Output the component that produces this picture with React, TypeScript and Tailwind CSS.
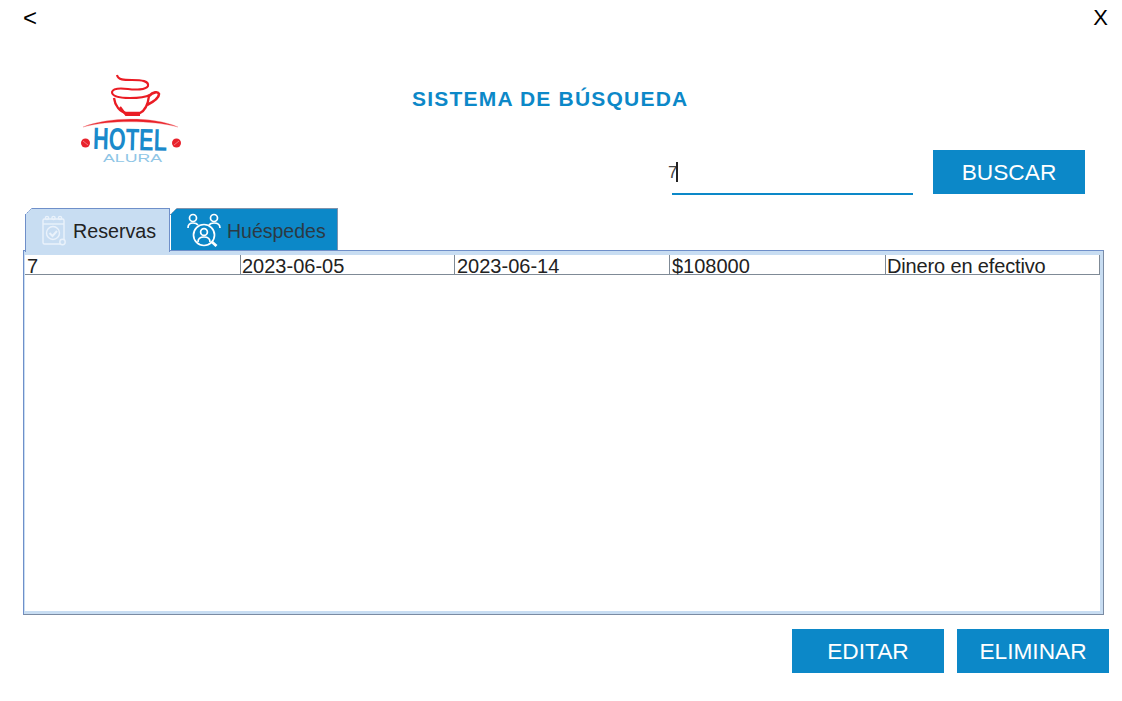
const font = { fontFamily: '"Liberation Sans", Arial, sans-serif' };

const HotelLogo = () => (
  <svg width="140" height="115" viewBox="0 0 140 115" className="shrink-0">
    {/* steam + cup */}
    <path d="M57 15C58 20 64 20 72 20C82 20 89 21 88 26C86 30 75 30 68 29C60 28 53 28 52 32C52 37 62 38 70 38C78 38 86 37 90 35" fill="none" stroke="#ea1c24" strokeWidth="2.1" />
    <path d="M54 38C55 46 60 52 66 53L80 53C86 50 88 44 89 36" fill="none" stroke="#ea1c24" strokeWidth="2.3" />
    <path d="M89 36C93 32 98 31 99 34C99 38 93 42 87 45" fill="none" stroke="#ea1c24" strokeWidth="2.6" />
    <path d="M60 47L66 55L80 55" fill="none" stroke="#ea1c24" strokeWidth="2.2" />
    {/* swoosh under the cup */}
    <path d="M23 67C48 57 92 56 118 67C92 60 48 60 23 67z" fill="#ea1c24" stroke="#f28a8e" strokeWidth="0.4" />
    {/* coffee beans */}
    <ellipse cx="25.5" cy="83" rx="4.5" ry="4.5" fill="#e8222c" />
    <path d="M23 81l5 4" stroke="#f7b5b8" strokeWidth="0.6" />
    <ellipse cx="116.5" cy="83" rx="4.5" ry="4.5" fill="#e8222c" />
    <path d="M119 81l-5 4" stroke="#f7b5b8" strokeWidth="0.6" />
    <text x="33" y="90" fontFamily="'Liberation Sans', sans-serif" fontWeight="700" fontSize="31" fill="#1a8acb" textLength="74" lengthAdjust="spacingAndGlyphs" transform="rotate(1.5 70 80)">HOTEL</text>
    <text x="43" y="102" fontFamily="'Liberation Sans', sans-serif" fontSize="11" fill="#8fc6e6" textLength="59" lengthAdjust="spacingAndGlyphs">ALURA</text>
  </svg>
);

const ReservasIcon = () => (
  <svg width="26" height="32" viewBox="0 0 26 32" fill="none" stroke="#eaf2fb" strokeWidth="1.4" className="shrink-0">
    <rect x="2" y="5" width="21" height="25" rx="1.5" />
    <path d="M2 10h21" />
    <circle cx="6" cy="4" r="1.6" />
    <circle cx="12.5" cy="4" r="1.6" />
    <circle cx="19" cy="4" r="1.6" />
    <circle cx="12" cy="19" r="6.5" />
    <path d="M8.5 19l3 3 4.5-5" strokeWidth="2" />
    <circle cx="21.5" cy="28" r="2.7" fill="#c8ddf2" />
  </svg>
);

const HuespedesIcon = () => (
  <svg width="36" height="34" viewBox="0 0 36 34" fill="none" stroke="#ffffff" strokeWidth="1.7" className="shrink-0">
    <circle cx="7" cy="5" r="3.5" />
    <path d="M2 15c0-3 1-5 5-5 2 0 4 .5 5 2" />
    <circle cx="28" cy="5" r="3.5" />
    <path d="M34 15c0-3-1-5-6-5-2 0-4 .5-5 2" />
    <circle cx="18" cy="22" r="10.5" />
    <circle cx="18" cy="19" r="3.4" />
    <path d="M12 29c0-3 2-5 6-5s6 2 6 5" />
    <path d="M26 29l4.5 4" strokeWidth="2.8" />
  </svg>
);

// corner cut of the tabs: white triangle plus a thin diagonal edge
const TabCorner = ({ color }: { color: string }) => (
  <svg width="7" height="7" viewBox="0 0 7 7" className="absolute -top-px -left-px">
    <path d="M0 0H7L0 7z" fill="#ffffff" />
    <path d="M0 7L7 0" stroke={color} strokeWidth="1" strokeDasharray="1.5 1" />
  </svg>
);

const ActionButton = ({ label }: { label: string }) => (
  <button className="w-[152px] h-[44px] bg-[#0c88c8] text-white text-[22.7px] leading-none flex items-center justify-center">
    {label}
  </button>
);

const cells = [
  { text: '7', width: 'w-[215px]', extra: 'pl-[2px]' },
  { text: '2023-06-05', width: 'w-[214px]', extra: 'pl-[1px] border-l border-[#7f8a96]' },
  { text: '2023-06-14', width: 'w-[215px]', extra: 'pl-[2px] border-l border-[#7f8a96]' },
  { text: '$108000', width: 'w-[216px]', extra: 'pl-[2px] border-l border-[#7f8a96]' },
  { text: 'Dinero en efectivo', width: 'flex-1', extra: 'pl-[1px] tracking-[-0.15px] border-l border-[#7f8a96]' },
];

export default function App() {
  return (
    <div className="w-[1122px] h-[701px] bg-white flex flex-col overflow-hidden text-[#222]" style={font}>
      <div className="h-[36px] flex items-start justify-between pl-[23px] pr-[14px] pt-[6px] text-black text-[22px] leading-[24px]">
        <span className="text-[24px]">&lt;</span>
        <span>X</span>
      </div>

      <div className="h-[172px] flex items-start">
        <div className="ml-[60px] mt-[24px]">
          <HotelLogo />
        </div>
        <div className="flex-1 flex flex-col">
          <h1 className="ml-[212px] mt-[51px] h-[24px] text-[21px] leading-[24px] tracking-[1.2px] font-bold text-[#0c88c8]">
            SISTEMA DE BÚSQUEDA
          </h1>
          <div className="mt-[39px] mr-[37px] flex items-start justify-end gap-[20px]">
            <div className="w-[241px] h-[45px] border-b-2 border-[#0c88c8] flex items-center">
              <span className="-ml-[4px] mt-[1px] text-[17px] leading-none text-[#444]">7</span>
              <span className="w-[2px] h-[20px] bg-[#222] -ml-[1px]" />
            </div>
            <ActionButton label="BUSCAR" />
          </div>
        </div>
      </div>

      <div className="h-[42px] flex items-stretch pl-[25px] gap-[1px]">
        <div className="relative z-10 w-[145px] h-[44px] bg-[#c8ddf2] border-t border-l border-r border-[#6f8fc9] flex items-center pb-[2px] pl-[15px] gap-[6px] text-[19.7px]">
          <TabCorner color="#6f8fc9" />
          <ReservasIcon />
          <span className="mt-[4px]">Reservas</span>
        </div>
        <div className="relative w-[167px] bg-[#0c88c8] border-t border-r border-[#7f93ad] flex items-center pl-[15px] gap-[5px] text-[19.5px] text-[#2b3a44]">
          <TabCorner color="#7f93ad" />
          <HuespedesIcon />
          <span className="mt-[4px]">Huéspedes</span>
        </div>
      </div>

      <div className="ml-[23px] w-[1081px] h-[365px] border border-[#6f8fc9] border-b-[#7a8ba3] border-r-[#7a8ba3] bg-white flex flex-col">
        <div className="h-[4px] bg-[#c8ddf2]" />
        <div className="flex-1 flex border-l border-r-[3px] border-b-[3px] border-[#c8ddf2] flex-col">
          <div className="h-[20px] flex border-b border-r border-[#7f8a96] text-[20px] leading-[22px]">
            {cells.map((c) => (
              <div key={c.text} className={`${c.width} ${c.extra} whitespace-nowrap`}>
                {c.text}
              </div>
            ))}
          </div>
        </div>
      </div>

      <div className="mt-[14px] flex justify-end gap-[13px] pr-[13px]">
        <ActionButton label="EDITAR" />
        <ActionButton label="ELIMINAR" />
      </div>
    </div>
  );
}
